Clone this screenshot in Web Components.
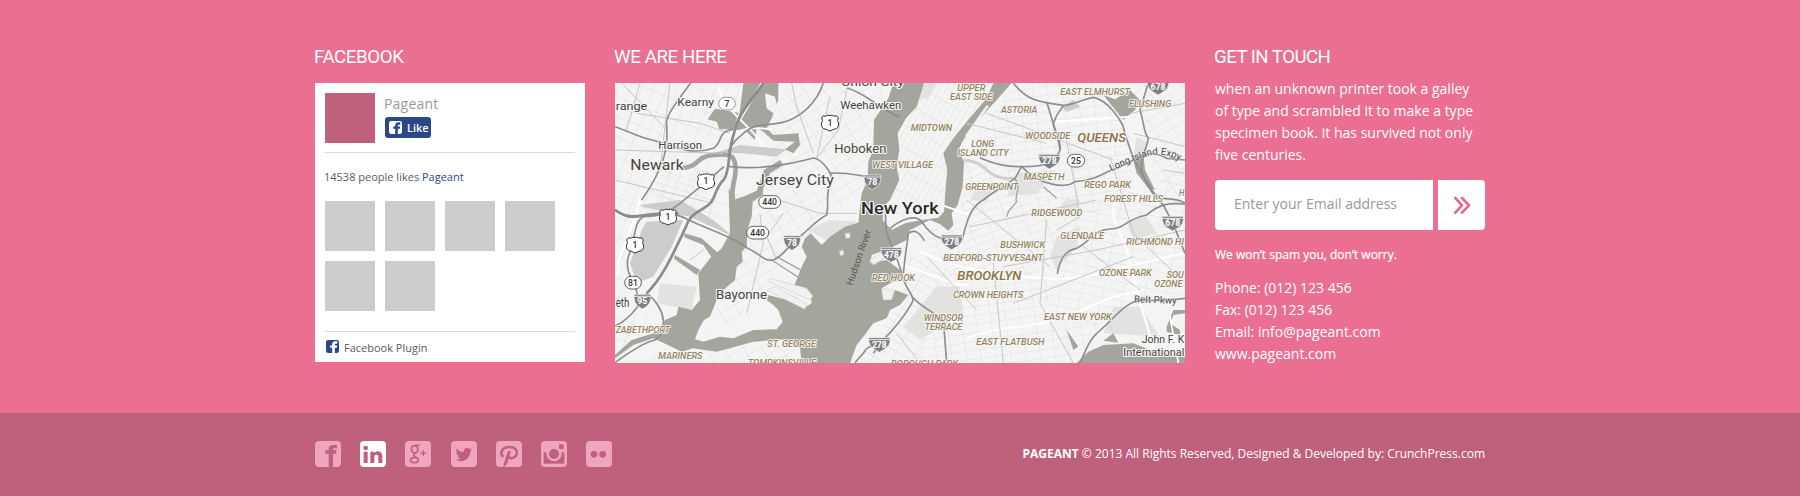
<!DOCTYPE html>
<html lang="en">
<head>
<meta charset="utf-8">
<title>Pageant</title>
<style>
body{margin:0;background:#ea6f91;font-family:"Open Sans","Liberation Sans",sans-serif;color:#fff}
</style>
</head>
<body>
<pageant-footer></pageant-footer>
<script>
const define = (name, html, setup) => customElements.define(name, class extends HTMLElement {
  constructor() {
    super();
    this.attachShadow({ mode: 'open' }).innerHTML = html;
  }
  connectedCallback() { if (setup) setup(this, this.shadowRoot); }
});

/* Street map, drawn at three units to the pixel */
const US = [[690,158,'1'],[318,334,'1'],[204,440,'1'],[105,524,'1']];
const OVAL = [[381,101,'7',50],[509,396,'440',66],[473,488,'440',66],[99,638,'81',50],[1428,272,'25',52]];
const INTER = [[817,334,'78',50],[576,516,'78',50],[127,692,'95',50],[874,552,'478',62],[838,822,'278',64],[1348,272,'278',64],[1055,514,'278',64],[1674,50,'678',64],[1718,458,'678',64]];
/* text, x, baseline, width, size, kind */
const LABELS = [
 ['range',47,120,95,35,'c'],['Kearny',232,108,110,33,'c'],['Union City',724,47,188,33,'c'],['Weehawken',721,118,183,33,'c'],
 ['Harrison',175,236,131,33,'c'],['Hoboken',703,250,156,37,'c'],['Newark',91,300,160,44,'c'],['Jersey City',468,345,233,43,'c'],
 ['New York',783,433,233,47,'b'],['Bayonne',348,686,153,37,'c'],['eth',47,711,41,38,'c'],
 ['ZABETHPORT',47,788,162,26,'a'],['MARINERS',175,868,132,26,'a'],['ST. GEORGE',502,830,146,26,'a'],['TOMPKINSVILLE',443,887,205,26,'a'],
 ['WEST VILLAGE',817,294,182,26,'a'],['RED HOOK',816,633,129,26,'a'],['MIDTOWN',932,182,124,26,'a'],
 ['UPPER',1072,63,84,26,'a'],['EAST SIDE',1050,90,127,26,'a'],['ASTORIA',1203,129,109,26,'a'],['LONG',1114,230,69,26,'a'],['ISLAND CITY',1073,257,153,26,'a'],
 ['EAST ELMHURST',1381,75,209,26,'a'],['FLUSHING',1587,111,127,26,'a'],['WOODSIDE',1276,207,135,26,'a'],['QUEENS',1432,217,146,37,'q'],
 ['GREENPOINT',1096,361,158,26,'a'],['MASPETH',1271,330,122,26,'a'],['REGO PARK',1453,354,139,26,'a'],['FOREST HILLS',1513,396,176,26,'a'],['H',1737,379,16,26,'a'],
 ['RIDGEWOOD',1294,438,153,26,'a'],['GLENDALE',1381,507,131,26,'a'],['RICHMOND HI',1579,525,173,26,'a'],['BUSHWICK',1201,534,134,26,'a'],
 ['BEDFORD-STUYVESANT',1030,573,299,26,'a'],['BROOKLYN',1072,630,192,37,'q'],['CROWN HEIGHTS',1059,684,211,26,'a'],
 ['OZONE PARK',1497,618,158,26,'a'],['SOU',1700,625,51,26,'a'],['OZONE',1663,651,84,26,'a'],
 ['WINDSOR',971,753,118,26,'a'],['TERRACE',974,780,113,26,'a'],['EAST NEW YORK',1332,750,203,26,'a'],['EAST FLATBUSH',1129,825,204,26,'a'],
 ['BOROUGH PARK',873,890,201,26,'a'],['John F. K',1625,819,128,31,'c'],['International',1570,859,183,31,'c']
];
const HIGHWAYS = [
 'M45 418C75 445 95 445 125 438C180 422 230 430 262 448C330 482 400 500 440 533C480 550 490 575 520 570C550 560 560 530 600 500C640 465 650 450 680 435C688 400 675 370 692 340C705 310 660 265 640 264C560 285 480 300 384 289',
 'M490 39C460 90 420 125 405 180C380 250 392 300 372 328C340 360 350 385 325 405C300 425 270 430 258 470C220 550 190 620 140 670C110 720 75 755 45 768',
 'M670 39C650 100 600 145 545 158C500 168 470 160 440 182C420 200 400 210 385 245',
 'M272 39C230 95 195 140 200 165C205 230 195 290 125 390','M45 170C90 185 120 205 165 212C230 235 280 255 340 235C370 215 350 185 400 178',
 'M372 290C320 335 290 360 240 400C200 430 180 440 130 440C100 455 110 500 85 560C70 620 120 640 110 690',
 'M45 878C90 845 140 815 165 810C200 790 205 720 140 670','M690 310C740 305 760 315 815 322','M740 54C790 65 830 110 899 142',
 'M855 400C858 430 855 460 860 490C875 530 895 570 905 610C915 660 950 680 935 700C905 755 860 800 838 822L820 850',
 'M870 476C900 450 945 430 965 455C1000 510 1040 515 1085 510C1095 490 1100 415 1150 390C1180 365 1210 350 1245 325L1265 290C1320 290 1365 285 1380 240C1385 220 1365 180 1360 165C1365 135 1380 125 1390 106',
 'M1240 39C1280 90 1310 95 1390 106C1420 105 1440 90 1480 82C1525 90 1560 150 1568 165C1580 210 1600 270 1620 300C1650 360 1660 380 1690 405L1718 458L1755 550',
 'M1340 95C1350 130 1380 220 1380 240','M1265 290C1320 350 1400 355 1425 335C1500 330 1520 300 1550 295C1610 270 1640 230 1700 265L1755 270',
 'M1140 263C1190 285 1220 290 1265 290','M1645 39L1620 120C1635 170 1630 185 1645 205C1635 260 1600 290 1650 350C1680 410 1710 370 1755 400',
 'M1372 612C1380 560 1400 540 1430 535C1470 515 1480 480 1530 477C1580 475 1570 450 1640 435C1680 400 1710 398 1755 402',
 'M1440 878C1460 840 1460 820 1490 790C1540 750 1570 700 1620 690C1680 695 1700 690 1755 685',
 'M910 610C915 560 920 530 925 490C945 475 960 490 973 512','M935 680C975 720 1000 725 1030 750L1040 878','M838 822C820 830 800 825 790 850L765 878'
];
const markers =
  US.map(([x,y,t]) => `<path d="M${x-20} ${y-21}q5 4 10 0q5-3 10 0q5-3 10 0q5 4 10 0l5 7q-5 8 0 14q4 18-14 20l-11 5l-11-5q-18-2-14-20q5-6 0-14Z" fill="#fff" stroke="#333" stroke-width="3"/><text class="n" x="${x}" y="${y+9}">${t}</text>`).join('') +
  OVAL.map(([x,y,t,w]) => `<rect x="${x-w/2}" y="${y-19}" width="${w}" height="38" rx="19" fill="#fff" stroke="${t==='7'?'#888':'#444'}" stroke-width="2.5"/><text class="n" x="${x}" y="${y+9}">${t}</text>`).join('') +
  INTER.map(([x,y,t,w]) => `<path d="M${x-w/2} ${y-19}h${w}q4 26-${w/2-10} 38l-10 6l-10-6q-${w/2-8}-12-${w/2-10}-38Z" fill="#7f8083" stroke="#f4f4f4" stroke-width="2"/><path d="M${x-w/2} ${y-13}h${w}" stroke="#fff" stroke-width="2.5"/><text class="n w" x="${x}" y="${y+11}">${t}</text>`).join('');
const labels = LABELS.map(([t,x,y,w,s,k]) => `<text class="${k}" x="${x}" y="${y}" font-size="${s}" textLength="${w}" lengthAdjust="spacingAndGlyphs">${t}</text>`).join('');
const grid = (id, w, h, a) => `<pattern id="${id}" width="${w}" height="${h}" patternUnits="userSpaceOnUse" patternTransform="rotate(${a})"><path d="M0 0H${w}M0 0V${h}" stroke="#dadbdb" stroke-width="2.6" fill="none"/></pattern>`;

define('city-map', `<style>
:host{display:block;height:280px;overflow:hidden}
svg{display:block;width:100%;height:100%;font-family:Roboto,"Liberation Sans",sans-serif}
text{paint-order:stroke;stroke:#f6f6f6;stroke-width:6px;stroke-linejoin:round;fill:#48443c}
.b{fill:#2b2a27;font-weight:500}
.a{fill:#948562;font-style:italic;font-weight:500;stroke-width:5px}
.q{fill:#88733c;font-style:italic;font-weight:500}
.n{font-size:26px;text-anchor:middle;stroke:none;fill:#333;font-weight:500}
.w{fill:#fff;font-weight:700}
.r{font-size:29px;stroke:none;fill:#55564f}
.h{font-size:29px;stroke-width:2px}
</style>
<svg viewBox="45 39 1710 840" preserveAspectRatio="none" role="img" aria-label="Map of New York">
<defs>${grid('g1',56,34,-68)}${grid('g2',74,38,18)}${grid('g3',17,60,29)}${grid('g4',44,26,-8)}${grid('g5',62,27,12)}${grid('g6',52,24,31)}${grid('g7',48,30,-33)}${grid('g8',55,22,-20)}<path id="expy" d="M1534 304Q1590 276 1640 259Q1685 243 1748 275"/></defs>
<rect x="45" y="39" width="1710" height="840" fill="#f4f4f4"/>
<path fill="url(#g1)" d="M45 39H420L385 290L240 450L45 440Z"/>
<path fill="url(#g2)" d="M180 300H420L400 480L120 420Z"/>
<path fill="url(#g1)" d="M45 440L110 440L60 700L45 720ZM45 720L180 740L45 879Z"/>
<path fill="url(#g7)" d="M560 39H850L800 360L700 430L600 520L420 740L330 780L450 390Z"/>
<path fill="url(#g3)" d="M970 39H1200L1160 130L1060 230L1035 430L950 450L870 430L890 200Z"/>
<path fill="url(#g4)" d="M1240 39H1500L1590 200L1600 400L1380 450L1280 330L1100 240Z"/>
<path fill="url(#g8)" d="M1095 270L1270 300L1400 450L1330 620L1050 600L940 500L1080 440Z"/>
<path fill="url(#g5)" d="M1400 440L1755 300V680L1600 690L1480 780L1340 740L1360 620Z"/>
<path fill="url(#g6)" d="M930 560L1050 600L950 879H760L900 710Z"/>
<path fill="url(#g4)" d="M1050 600L1350 610L1340 740L1500 760L1430 879H950Z"/>
<path fill="url(#g7)" d="M1600 39H1755V400L1660 330ZM60 879L300 835L600 820V879Z"/>
<g fill="#e2e3e1">
<path d="M920 39H1010L985 85L935 90ZM1250 310L1370 300L1310 370L1220 380ZM1350 560L1370 500L1440 470L1430 530L1370 600ZM1400 385L1440 390L1430 425L1375 420ZM1580 455L1640 440L1670 490L1600 510ZM1610 200L1640 215L1630 270L1600 260ZM1010 650L1080 650L1090 730L960 810L910 770ZM1140 340L1180 355L1160 395L1110 390ZM1540 710H1620L1680 800L1510 790ZM180 640L290 650L275 720L170 700ZM620 480L690 450L775 455L735 500L680 510Z"/>
<path fill="#cccdca" d="M140 455L250 450L215 530L160 620L110 640L90 580L125 480ZM340 250L420 225L560 238L530 260L430 250ZM120 405L240 390L340 450L400 500L270 440L130 412ZM1385 110L1420 90L1440 110L1400 125Z"/>
</g>
<g fill="#a4a69e">
<path d="M430 39H535V90L515 145L500 175L520 195L595 190L600 225L580 250L555 238L585 215L520 212L490 185L470 175L465 210L440 185L410 180L420 120ZM323 148L345 116L415 128L402 178H358L350 155Z"/>
<path d="M386 355L405 388L435 378L470 362L492 300L540 270L550 285L510 310L490 355L488 375L458 395L455 440L442 480L440 530L425 545L428 575L410 590L405 630L370 660L350 690L330 740L312 750L295 780L285 808L310 815L360 800L400 805L460 780L530 778L548 755L535 720L520 705L500 690L505 675L560 690L610 715L635 700L632 680L575 660L590 630L605 590L620 560L605 530L615 505L632 490L665 525L690 500L735 470L775 458L785 370L803 330L805 275L820 240L822 150L842 120L865 85L880 39H972L950 110L918 145L893 190L898 240L890 290L898 330L870 390L850 410L848 450L875 480L915 460L965 450L1015 443L1032 425L1038 340L1042 300L1030 250L1060 205L1100 155L1160 85L1180 39H1235L1190 90L1130 155L1090 210L1075 240L1092 275L1088 350L1073 405L1055 430L1060 465L1045 482L1020 462L990 450L960 465L930 480L920 510L890 525L855 540L815 555L810 580L860 570L900 600L905 625L870 640L845 655L850 690L875 690L885 660L925 675L900 705L870 720L860 745L820 760L790 800L770 825L750 879H605L600 835L560 808L460 815L390 835L350 845L280 835L245 845L210 828L160 805L100 825L45 865V855L95 810L175 785L195 750L230 735L235 710L275 720L300 690L295 610L330 565L365 535L390 490L388 430Z"/>
<path d="M253 490L305 505L355 550L340 570L310 525L253 502ZM225 555L300 600L290 615L222 566Z"/>
<path d="M1510 75L1545 88L1590 60L1620 90L1605 120L1570 150L1550 125ZM1600 272L1630 250L1635 300L1665 360L1645 355L1610 310ZM1430 879L1465 845L1510 825L1600 820L1650 840L1700 850L1755 860V879ZM1520 745L1535 780L1555 818L1510 812L1540 790ZM1400 780L1435 830L1420 840ZM1700 770L1720 720H1755V730L1720 735L1710 760L1740 780V795L1700 785Z"/>
</g>
<g fill="none" stroke="#a4a69e" stroke-width="14"><path d="M245 295C300 290 285 260 340 255C400 248 406 262 407 300C405 340 392 350 399 385"/><path stroke="#cfd0cc" stroke-width="9" d="M1092 270C1170 275 1150 330 1240 325"/><path d="M1735 879L1710 740" stroke-width="5" stroke="#fff"/><path stroke-width="4" d="M1240 325C1270 340 1240 385 1250 395L1225 425L1220 440M1330 350L1370 385M515 570L600 625M530 560L620 610"/></g>
<path fill="#f1f1f1" stroke="#d2d2d0" stroke-width="2" d="M510 625L620 655L638 678L630 690L565 660L508 636ZM525 650L620 700L615 718L500 660ZM845 655L880 660L875 688L850 690ZM735 490L750 490V503L738 505ZM718 545L728 540L732 553L722 557ZM810 570L850 545L870 555L820 585Z"/>
<path fill="#f3f3f3" d="M1093 200L1160 105L1167 108L1105 195ZM495 70L525 80L532 110L520 130L500 115Z"/>
<g fill="none" stroke="#fff" stroke-width="6"><path d="M355 50C370 120 430 145 490 225M385 195C440 175 450 170 515 178M485 39L420 150M120 385L110 430L60 560L48 620M870 570L1060 640L1100 645M960 545C1020 570 1080 610 1380 628C1500 620 1600 580 1755 550M1030 407L1110 435M1540 390V440L1580 540L1620 700L1670 860M1100 805C1200 760 1310 785 1450 720C1530 680 1580 665 1620 668M1360 155L1590 140"/></g>
<g fill="none" stroke="#c6c7c7" stroke-width="3"><path d="M575 39L590 110L640 250M690 80L650 265M740 60L715 180L650 265M480 430L490 520L440 730M550 430L500 500L530 570M490 375L660 430L770 430M110 130L300 160L390 190M45 240L370 250M210 39L180 300M120 39L80 180M45 330L340 400M65 39L200 180M270 570L310 540M1100 160L1340 220M1160 130L1540 270M1400 210L1440 440L1370 480M1100 390L1350 590M1110 470L1490 390M1210 590L1490 540L1755 480M1340 450L1320 700L1420 879M1180 580L1210 879M1530 260L1600 490L1755 640M1450 530L1620 660M1240 700L1600 560M890 790L960 879M980 560L1130 720M1590 130L1755 100M1600 190L1755 230M1690 300L1755 310"/></g>
<g fill="none" stroke="#8d8f8f" stroke-width="5">${HIGHWAYS.map(d=>`<path d="${d}"/>`).join('')}<path stroke-width="8" stroke="#8b8c8b" d="M45 420C85 448 110 438 150 434L235 430M490 39C455 90 415 130 405 180C380 250 392 300 372 328C340 360 350 385 325 405C300 425 270 430 258 470C220 550 190 620 140 670"/></g>
${markers}${labels}
<text class="r" transform="translate(757 648) rotate(-71)" textLength="174">Hudson River</text>
<text class="h"><textPath href="#expy">Long Island Expy</textPath></text>
<text class="h" transform="translate(1602 697) rotate(2)" textLength="128">Belt Pkwy</text>
</svg>`);

define('fb-glyph', `<style>:host{display:block;width:13px;height:13px;color:#fff;--cut:#2a4887}svg{display:block;width:100%;height:100%}</style>
<svg viewBox="0 0 78 78"><rect width="78" height="78" rx="13" fill="currentColor"/><path style="fill:var(--cut)" d="M37 78V47H25V33H37V27C37 15 45 8 57 8H68V22H60C55 22 53 24 53 29V33H67L65 47H53V78Z"/></svg>`);

define('like-button', `<style>:host{display:flex;align-items:center;gap:5px;box-sizing:border-box;width:46px;height:21px;padding-left:4px;background:#2a4887;border-radius:3px;font:600 11px/20px "Open Sans",sans-serif;color:#fff}</style><fb-glyph></fb-glyph><slot></slot>`);

define('facebook-card', `<style>
:host{display:block;box-sizing:border-box;height:279px;padding:10px;background:#fff;color:#5b5b5b;font-size:11px}
.head{display:flex;gap:10px;padding-bottom:9px;border-bottom:1px solid #dcdcdc}
.avatar{width:50px;height:50px;background:#bf607d}
.name{font-size:14px;line-height:20px;color:#999;margin:1px 0 3px -1px;letter-spacing:.2px}
p{margin:16px 0 0 -1px;line-height:16px}
b{font-weight:400;color:#2a4887}
.people{display:grid;grid-template-columns:repeat(4,50px);gap:10px;margin-top:16px;height:110px}
.people i{height:50px;background:#ccc}
.plugin{display:flex;gap:5px;margin-top:20px;padding:8px 0 0 1px;border-top:1px solid #dcdcdc;line-height:15px}
.plugin fb-glyph{color:#2a4887;--cut:#fff}
</style>
<div class="head"><div class="avatar"></div><div><div class="name">Pageant</div><like-button>Like</like-button></div></div>
<p>14538 people likes <b>Pageant</b></p>
<div class="people"><i></i><i></i><i></i><i></i><i></i><i></i></div>
<div class="plugin"><fb-glyph></fb-glyph><span>Facebook Plugin</span></div>`);

define('news-signup', `<style>
:host{display:grid;grid-template-columns:218px 47px;gap:5px;height:50px;margin-top:14px}
div{display:flex;align-items:center;background:#fff}
.in{padding:0 0 2px 19px;border-radius:4px 0 0 4px;color:#999;font-size:14px;height:48px}
.go{justify-content:center;border-radius:0 4px 4px 0}
</style><div class="in"><slot></slot></div><div class="go"><svg width="18" height="18" viewBox="0 0 54 54" fill="none" stroke="#e46a8d" stroke-width="8" stroke-linecap="round" stroke-linejoin="round"><path d="M7 6L27 28L7 50M27 6L48 28L27 50"/></svg></div>`);

define('contact-info', `<style>
:host{display:block;font-size:14px;line-height:22px}
p{margin:0;white-space:nowrap}
.note{font-size:12px;line-height:20px;margin:15px 0 12px;-webkit-text-stroke:.2px #fff}
</style>
<p>when an unknown printer took a galley<br>of type and scrambled it to make a type<br>specimen book. It has survived not only<br>five centuries.</p>
<news-signup>Enter your Email address</news-signup>
<p class="note">We won’t spam you, don’t worry.</p>
<p>Phone: (012) 123 456<br>Fax: (012) 123 456<br>Email: info@pageant.com<br>www.pageant.com</p>`);

define('footer-column', `<style>
:host{display:block}
h2{margin:0 0 0 -1px;height:36px;font:400 18.7px/20px Roboto,"Liberation Sans",sans-serif;letter-spacing:-.4px}
:host([tight]) h2{height:31px;letter-spacing:-.55px}
</style><h2></h2><slot></slot>`, (el, root) => { root.querySelector('h2').textContent = el.getAttribute('heading'); });

const GLYPHS = {
 facebook:'<path d="M41 78V38H31V27H41V24C41 16 46 12 55 12H66V22H60C55 22 54 23 54 27H65L63 38H54V78Z"/>',
 linkedin:'<circle cx="17" cy="21" r="7"/><path d="M11 32H23V66H11ZM31 32H43V37C46 32 50 31 54 31C63 31 67 37 67 46V66H55V48C55 43 53 41 49 41C45 41 43 44 43 48V66H31Z"/>',
 google:'<g fill="none" stroke="currentColor"><ellipse cx="29" cy="25" rx="9.500" ry="11" stroke-width="5.500" transform="rotate(-12 29 25)"/><path d="M30 13H44M31 36C24 40 25 43 31 47C44 54 43 65 27 65C11 65 13 49 32 49" stroke-width="5"/><path d="M55 28V45M46.500 36.500H63.500" stroke-width="4"/></g>',
 twitter:'<path transform="translate(14 16) scale(2.04)" d="M23.953 4.57a10 10 0 01-2.825.775 4.958 4.958 0 002.163-2.723c-.951.555-2.005.959-3.127 1.184a4.92 4.92 0 00-8.384 4.482C7.69 8.095 4.067 6.13 1.64 3.162a4.822 4.822 0 00-.666 2.475c0 1.71.87 3.213 2.188 4.096a4.904 4.904 0 01-2.228-.616v.06a4.923 4.923 0 003.946 4.827 4.996 4.996 0 01-2.212.085 4.936 4.936 0 004.604 3.417 9.867 9.867 0 01-6.102 2.105c-.39 0-.779-.023-1.17-.067a13.995 13.995 0 007.557 2.209c9.053 0 13.998-7.496 13.998-13.985 0-.21 0-.42-.015-.63A9.935 9.935 0 0024 4.59z"/>',
 pinterest:'<path d="M22 47C9 37 18 18 41 18C61 18 66 32 60 43C55 53 42 54 38 47" fill="none" stroke="currentColor" stroke-width="7.500"/><path d="M36 30H45L33 68L25 78H22L24 66Z"/>',
 instagram:'<path d="M8 34H70V68H8Z"/><circle cx="39" cy="38" r="23" fill="#f0a5bf"/><circle cx="39" cy="39" r="15"/><rect x="54" y="10" width="14" height="14" rx="3"/>',
 flickr:'<circle cx="24" cy="40" r="10"/><circle cx="50" cy="40" r="10"/>'
};
define('social-icon', `<style>
:host{display:block;width:26px;height:26px;color:#bf607d}
svg{display:block}rect.bg{fill:#f0a5bf}
:host([active]) rect.bg{fill:#fff}
</style><svg width="26" height="26" viewBox="0 0 78 78" fill="currentColor"></svg>`, (el, root) => {
  root.querySelector('svg').innerHTML = '<rect class="bg" width="78" height="78" rx="12"/>' + GLYPHS[el.getAttribute('name')];
});

define('pageant-footer', `<style>
:host{display:flex;flex-direction:column;height:496px;background:#ea6f91}
.cols{display:grid;grid-template-columns:270px 570px 270px;gap:30px;width:1170px;height:366px;padding-top:47px;margin:0 auto}
.bar{flex:1;background:#bf607d}
.row{display:flex;justify-content:space-between;width:1170px;margin:0 auto;padding-top:28px}
.social{display:flex;gap:19.2px}
.copy{font-size:12px;line-height:26px;white-space:nowrap}
</style>
<div class="cols">
<footer-column heading="FACEBOOK"><facebook-card></facebook-card></footer-column>
<footer-column heading="WE ARE HERE"><city-map></city-map></footer-column>
<footer-column heading="GET IN TOUCH" tight><contact-info></contact-info></footer-column>
</div>
<div class="bar"><div class="row"><div class="social">
<social-icon name="facebook"></social-icon><social-icon name="linkedin" active></social-icon><social-icon name="google"></social-icon><social-icon name="twitter"></social-icon><social-icon name="pinterest"></social-icon><social-icon name="instagram"></social-icon><social-icon name="flickr"></social-icon>
</div><div class="copy"><b>PAGEANT</b> © 2013 All Rights Reserved, Designed &amp; Developed by: CrunchPress.com</div></div></div>`);
</script>
</body>
</html>
